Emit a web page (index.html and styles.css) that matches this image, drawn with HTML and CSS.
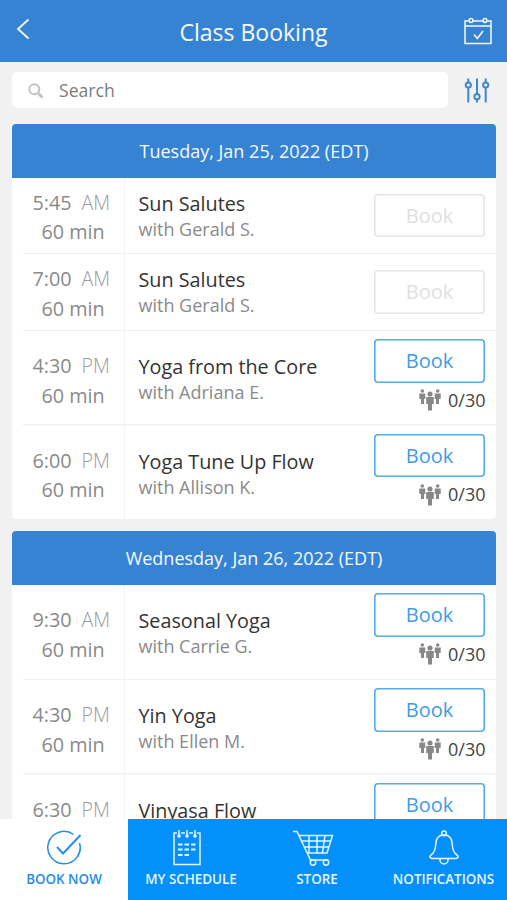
FILE: index.html
```html
<!DOCTYPE html>
<html lang="en">
<head>
<meta charset="utf-8">
<title>Class Booking</title>
<link rel="stylesheet" href="styles.css">
</head>
<body>
<svg class="defs" width="0" height="0" aria-hidden="true">
  <symbol id="people" viewBox="0 0 22 22">
    <circle cx="3.300" cy="2" r="1.800"/>
    <path d="M.3 4.500h6V10H5v5H2v-5H.3z"/>
    <circle cx="18.700" cy="2" r="1.800"/>
    <path d="M15.700 4.500h6V10H20v5h-3v-5h-1.300z"/>
    <circle cx="11" cy="5" r="2.600"/>
    <path d="M7.200 8h7.600v7H13v6.500H9V15H7.200z"/>
  </symbol>
</svg>
<div class="app">
  <header class="topbar">
    <svg class="back" viewBox="0 0 14 22"><path d="M12.500 1.500 2 11l10.500 9.500"/></svg>
    <h1>Class Booking</h1>
    <svg class="calendar" viewBox="0 0 28 28"><path d="M4.500 4H1v22.500h26V4h-3.500M9 4h10M1 9h26M10 17.500l3.300 4L19 14"/><circle cx="7" cy="3.500" r="1.900"/><circle cx="21" cy="3.500" r="1.900"/></svg>
  </header>
  <div class="tools">
    <div class="search">
      <svg viewBox="0 0 16 16"><circle cx="6.300" cy="6.300" r="5"/><path class="handle" d="m10.500 10.500 4 4"/></svg>
      <span>Search</span>
    </div>
    <svg class="filters" viewBox="0 0 26 26"><path d="M4.300.5v4M4.300 10v14.500M13 .5v15.500M13 21.500v3M21.700.5v4M21.700 10v14.500"/><circle cx="4.300" cy="7" r="2.600"/><circle cx="13" cy="18.700" r="2.600"/><circle cx="21.700" cy="7" r="2.600"/></svg>
  </div>
  <main>
    <section class="day">
      <h2>Tuesday, Jan 25, 2022 (EDT)</h2>
      <article class="row closed">
        <div class="when"><p><span class="hour">5:45</span><span class="half">AM</span></p><p class="length">60 min</p></div>
        <div class="what"><h3>Sun Salutes</h3><p>with Gerald S.</p></div>
        <div class="action"><button disabled>Book</button></div>
      </article>
      <article class="row closed second">
        <div class="when"><p><span class="hour">7:00</span><span class="half">AM</span></p><p class="length">60 min</p></div>
        <div class="what"><h3>Sun Salutes</h3><p>with Gerald S.</p></div>
        <div class="action"><button disabled>Book</button></div>
      </article>
      <article class="row">
        <div class="when"><p><span class="hour">4:30</span><span class="half">PM</span></p><p class="length">60 min</p></div>
        <div class="what"><h3>Yoga from the Core</h3><p>with Adriana E.</p></div>
        <div class="action"><button>Book</button><p class="spots"><svg><use href="#people"/></svg>0/30</p></div>
      </article>
      <article class="row last">
        <div class="when"><p><span class="hour">6:00</span><span class="half">PM</span></p><p class="length">60 min</p></div>
        <div class="what"><h3>Yoga Tune Up Flow</h3><p>with Allison K.</p></div>
        <div class="action"><button>Book</button><p class="spots"><svg><use href="#people"/></svg>0/30</p></div>
      </article>
    </section>
    <section class="day">
      <h2>Wednesday, Jan 26, 2022 (EDT)</h2>
      <article class="row first">
        <div class="when"><p><span class="hour">9:30</span><span class="half">AM</span></p><p class="length">60 min</p></div>
        <div class="what"><h3>Seasonal Yoga</h3><p>with Carrie G.</p></div>
        <div class="action"><button>Book</button><p class="spots"><svg><use href="#people"/></svg>0/30</p></div>
      </article>
      <article class="row">
        <div class="when"><p><span class="hour">4:30</span><span class="half">PM</span></p><p class="length">60 min</p></div>
        <div class="what"><h3>Yin Yoga</h3><p>with Ellen M.</p></div>
        <div class="action"><button>Book</button><p class="spots"><svg><use href="#people"/></svg>0/30</p></div>
      </article>
      <article class="row">
        <div class="when"><p><span class="hour">6:30</span><span class="half">PM</span></p></div>
        <div class="what"><h3>Vinyasa Flow</h3></div>
        <div class="action"><button>Book</button></div>
      </article>
    </section>
  </main>
  <nav class="tabs">
    <a class="tab active"><svg viewBox="0 0 36 36"><path d="M27.500 4.500A16.200 16.200 0 1 0 33.500 13"/><path class="bold" d="m11 17 6 6.500L34.500 5"/></svg><span>BOOK NOW</span></a>
    <a class="tab"><svg class="planner" viewBox="0 0 36 36"><path d="M8 3H5v31.500h26V3h-3M12 3h4M20 3h4M10 0v6M18 0v6M26 0v6"/><g fill="currentColor" stroke="none"><circle cx="10" cy="6" r="1.800"/><circle cx="18" cy="6" r="1.800"/><circle cx="26" cy="6" r="1.800"/></g><path class="bold" d="M9 14.500h4.500M15.500 14.500h4.500M22 14.500h4.500M9 19.500h4.500M15.500 19.500h4.500M22 19.500h4.500M9 25h4.500M15.500 25h4.500"/></svg><span>MY SCHEDULE</span></a>
    <a class="tab"><svg class="cart" viewBox="0 0 42 36"><path d="M1 1.500h4L18.500 30H36M7 5.500h33.500L35 23H15.200M10 11h28.700M12.500 17h24.400M17 5.500V23M25 5.500V23M33 5.500 30.500 23"/><circle cx="21" cy="32.500" r="2.700"/><circle cx="34" cy="32.500" r="2.700"/></svg><span>STORE</span></a>
    <a class="tab"><svg viewBox="0 0 36 36"><path d="M18 5c-5.500 0-8 4-8.200 9-.3 6-1.300 9-5.300 11.500-1.500 1-.8 2.500 1.500 3h24c2.300-.5 3-2 1.500-3-4-2.500-5-5.500-5.300-11.500C26 9 23.500 5 18 5z"/><circle cx="18" cy="3.400" r="2.300"/><path d="M14 28.500v1.500a4 4 0 0 0 8 0v-1.500"/></svg><span>NOTIFICATIONS</span></a>
  </nav>
</div>
</body>
</html>
```
FILE: styles.css
```css
* { box-sizing: border-box; }
body { margin: 0; background: #f1f1f1; font-family: "Open Sans", "Noto Sans", sans-serif; }
h1, h2, h3, p { margin: 0; font-weight: 400; }
svg { display: block; fill: none; stroke: currentColor; stroke-width: 1.5; flex: none; }
.defs { position: absolute; }
.app { height: 900px; display: flex; flex-direction: column; overflow: hidden; }
.topbar { height: 61.500px; flex: none; display: grid; grid-template-columns: 46px 1fr 46px; align-items: center; background: #3783d3; color: #f4faff; }
.topbar h1 { font-size: 23px; line-height: 30px; text-align: center; padding: 2px 0 0; }
.back { width: 14px; height: 22px; margin: 0 0 4px 16px; stroke-width: 1.8; }
.calendar { width: 28px; height: 28px; margin-left: 3px; }
.tools { height: 62px; flex: none; display: flex; align-items: flex-start; padding: 10.500px 16px 0 12px; }
.search { width: 436px; height: 36px; display: flex; align-items: center; gap: 15px; padding-left: 16px; border-radius: 5px; background: #fff; color: #7c7c7c; font-size: 17.600px; }
.search svg { width: 16px; height: 16px; color: #c4c4c4; stroke-width: 2; margin-top: 1px; }
.search .handle { stroke-width: 3; }
.filters { width: 26px; height: 26px; margin: 6px 0 0 16px; color: #4186cf; stroke-width: 2; }
main { flex: 1; min-height: 0; overflow: hidden; padding: 0 11px 0 12px; }
.day { margin-bottom: 12px; border-radius: 4px; background: #fff; overflow: hidden; }
.day h2 { height: 54px; line-height: 54px; text-align: center; background: #3783d3; color: #f4faff; font-size: 18px; }
.row { height: 94.500px; display: grid; grid-template-columns: 113px 1fr 122px; background: linear-gradient(#f0f2f2, #f0f2f2) 11px 100% / 100% 1.500px no-repeat; }
.row.closed { height: 76.500px; }
.row.second { height: 77px; }
.row.first { height: 95px; }
.row.last { height: 93.500px; background: none; }
.when { border-right: 1px solid #f3f5f5; padding: 20px 0 0 20.500px; color: #8a8a8a; font-size: 19.800px; line-height: 30px; }
.closed .when { padding-top: 10px; }
.when p { display: flex; height: 29.500px; white-space: nowrap; }
.hour { width: 49px; }
.half { color: #9b9b9b; font-weight: 300; font-size: 19.500px; }
.when .length { padding-left: 9px; }
.what { padding: 23px 0 0 13.500px; white-space: nowrap; }
.closed .what { padding-top: 13px; }
.what h3 { font-size: 19.800px; line-height: 26px; color: #333; }
.what p { font-size: 18px; line-height: 25px; color: #8a8a8a; }
.action { padding: 8px 10.500px 0 0; }
.closed .action { padding-top: 16px; }
button { display: block; width: 111px; height: 43.500px; padding: 0; border: 0; box-shadow: inset 0 0 0 1.600px #55aceb; border-radius: 4px; background: #fff; color: #3d9ce5; font: 400 20px/43px "Open Sans", sans-serif; }
button:disabled { box-shadow: inset 0 0 0 1.600px #e6e6e6; color: #e0e0e0; }
.spots { display: flex; align-items: center; justify-content: flex-end; gap: 7px; margin-top: 5px; font-size: 18px; line-height: 24px; color: #444; }
.spots svg { width: 22px; height: 22px; fill: #888; stroke: none; margin-top: 1px; }
.tabs { height: 81px; flex: none; display: grid; grid-template-columns: 128px 126px 126px 127px; background: #0390fb; color: #e6f5ff; }
.tab { display: flex; flex-direction: column; align-items: center; padding-top: 11px; font-size: 13.400px; font-weight: 600; line-height: 18px; white-space: nowrap; }
.tab svg { width: 36px; height: 36px; margin-bottom: 3.500px; }
.tab .planner { margin-right: 8px; }
.tab .cart { width: 42px; margin-right: 8px; }
.tab .bold { stroke-width: 1.900; }
.tab.active { background: #fff; color: #258de8; }
```
